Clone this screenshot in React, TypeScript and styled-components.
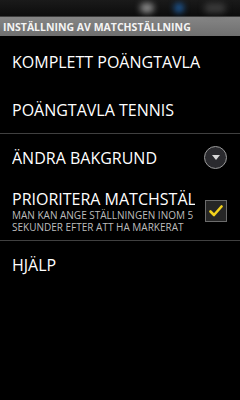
import styled, { createGlobalStyle } from "styled-components";

const GlobalStyle = createGlobalStyle`
  html, body {
    margin: 0;
    padding: 0;
    background: #000;
  }
  body {
    font-family: "Open Sans", "DejaVu Sans", sans-serif;
  }
`;

type Pref = {
  title: string;
  summary?: string;
  widget?: "list" | "check";
  divider?: boolean;
};

const prefs: Pref[] = [
  { title: "KOMPLETT POÄNGTAVLA" },
  { title: "POÄNGTAVLA TENNIS", divider: true },
  { title: "ÄNDRA BAKGRUND", widget: "list" },
  {
    title: "PRIORITERA MATCHSTÄLLNING",
    summary: "MAN KAN ANGE STÄLLNINGEN INOM 5 SEKUNDER EFTER ATT HA MARKERAT",
    widget: "check",
    divider: true,
  },
  { title: "HJÄLP" },
];

const App = () => {
  return (
    <Screen>
      <GlobalStyle />
      <StatusBar>
        <StatusBlob $color="#8a8a8a" $w={14} />
        <StatusBlob $color="#1e5a9a" $w={10} />
        <StatusBlob $color="#3a3a3a" $w={22} />
      </StatusBar>
      <TitleBar>INSTÄLLNING AV MATCHSTÄLLNING</TitleBar>
      <List>
        {prefs.map((p) => (
          <Row key={p.title} $divider={p.divider} $tall={!!p.summary}>
            <Texts>
              <Title>{p.title}</Title>
              {p.summary && <Summary>{p.summary}</Summary>}
            </Texts>
            {p.widget === "list" && (
              <ListIcon>
                <svg width="8" height="5" viewBox="0 0 8 5">
                  <path d="M0 0 L8 0 L4 5 Z" fill="#d8d8d8" />
                </svg>
              </ListIcon>
            )}
            {p.widget === "check" && (
              <CheckBox>
                <svg width="14" height="12" viewBox="0 0 14 12">
                  <path
                    d="M1.5 6.5 L5 10 L12.5 1.5"
                    fill="none"
                    stroke="#f2d21c"
                    strokeWidth="2.6"
                    strokeLinecap="round"
                    strokeLinejoin="round"
                  />
                </svg>
              </CheckBox>
            )}
          </Row>
        ))}
      </List>
    </Screen>
  );
};

const Screen = styled.div`
  width: 240px;
  height: 400px;
  background: #000;
  overflow: hidden;
`;

const StatusBar = styled.div`
  height: 16px;
  display: flex;
  align-items: center;
  justify-content: flex-end;
  gap: 20px;
  padding-right: 14px;
  background: linear-gradient(#1a1a1a, #0c0c0c);
  border-bottom: 1px solid #3c3c3c;
`;

const StatusBlob = styled.div<{ $color: string; $w: number }>`
  width: ${(p) => p.$w}px;
  height: 10px;
  border-radius: 5px;
  background: ${(p) => p.$color};
  filter: blur(3px);
`;

const TitleBar = styled.div`
  height: 19px;
  display: flex;
  align-items: center;
  padding-left: 3px;
  background: linear-gradient(#858585, #6f6f6f);
  color: #f4f4f4;
  font-size: 10.5px;
  font-weight: 700;
  white-space: nowrap;
  overflow: hidden;
`;

const List = styled.div`
  display: flex;
  flex-direction: column;
  padding-top: 2px;
`;

const Row = styled.div<{ $divider?: boolean; $tall?: boolean }>`
  height: ${(p) => (p.$tall ? 59 : 48)}px;
  display: flex;
  align-items: center;
  padding: 0 13px 0 12px;
  gap: 10px;
  border-bottom: 1px solid ${(p) => (p.$divider ? "#404040" : "transparent")};
  box-sizing: border-box;
`;

const Texts = styled.div`
  flex: 1;
  min-width: 0;
  display: flex;
  flex-direction: column;
`;

const Title = styled.div`
  color: #fff;
  font-size: 16px;
  line-height: 20px;
  white-space: nowrap;
  overflow: hidden;
`;

const Summary = styled.div`
  color: #bdbdbd;
  font-size: 10px;
  line-height: 12px;
`;

const ListIcon = styled.div`
  width: 21px;
  height: 21px;
  border-radius: 50%;
  border: 1px solid #9a9a9a;
  background: #2a2a2e;
  display: flex;
  align-items: center;
  justify-content: center;
  flex-shrink: 0;
`;

const CheckBox = styled.div`
  width: 20px;
  height: 20px;
  border: 1px solid #6c6c6c;
  background: #262626;
  display: flex;
  align-items: center;
  justify-content: center;
  flex-shrink: 0;
`;

export default App;
